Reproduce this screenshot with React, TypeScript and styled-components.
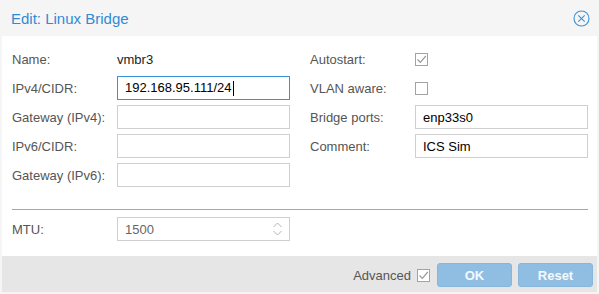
import React from 'react';
import styled, { createGlobalStyle } from 'styled-components';

const GlobalStyle = createGlobalStyle`
  body {
    margin: 0;
    font-family: "Liberation Sans", Arial, sans-serif;
    font-size: 13px;
  }
  * {
    box-sizing: border-box;
  }
`;

const Window = styled.div`
  width: 599px;
  height: 294px;
  background: #f5f5f5;
  padding: 0 2px 2px;
  display: flex;
  flex-direction: column;
`;

const Header = styled.div`
  height: 36px;
  display: flex;
  align-items: center;
  justify-content: space-between;
  padding: 0 7px 0 9px;
`;

const Title = styled.div`
  font-size: 15px;
  color: #2f8bd5;
`;

const CloseButton = styled.button`
  width: 17px;
  height: 17px;
  padding: 0;
  border: none;
  background: none;
  display: flex;
  align-items: center;
  justify-content: center;
`;

const Body = styled.div`
  flex: 1;
  background: #fff;
  padding: 11px 9px 0 10px;
`;

const Columns = styled.div`
  display: grid;
  grid-template-columns: 278px 278px;
  column-gap: 20px;
`;

const Column = styled.div`
  display: flex;
  flex-direction: column;
  gap: 5px;
`;

const Row = styled.div`
  display: flex;
  align-items: center;
  height: 24px;
`;

const Label = styled.div`
  width: 105px;
  color: #555;
`;

const Value = styled.div`
  color: #222;
`;

const Field = styled.div<{ $focused?: boolean; $muted?: boolean }>`
  width: 173px;
  height: 24px;
  border: 1px solid ${(p) => (p.$focused ? '#3892d4' : '#cfcfcf')};
  padding: 0 6px 0 7px;
  display: flex;
  align-items: center;
  justify-content: space-between;
  color: ${(p) => (p.$muted ? '#666' : '#000')};
  background: #fff;
`;

const Caret = styled.span`
  display: inline-block;
  width: 1px;
  height: 15px;
  background: #000;
  vertical-align: middle;
  margin-left: 1px;
`;

const Box = styled.span`
  width: 13px;
  height: 13px;
  border: 1px solid #a3a3a3;
  display: inline-flex;
  align-items: center;
  justify-content: center;
  background: #fff;
`;

const Separator = styled.div`
  height: 1px;
  background: #a8a8a8;
  margin: 22px 0 7px;
`;

const Footer = styled.div`
  height: 36px;
  background: #e6e6e6;
  display: flex;
  justify-content: flex-end;
  align-items: flex-start;
  gap: 6px;
  padding: 7px 4px 0 0;
`;

const Advanced = styled.div`
  height: 24px;
  display: flex;
  align-items: center;
  gap: 6px;
  margin-right: 1px;
  color: #555;
`;

const Button = styled.button`
  width: 75px;
  height: 24px;
  border: 1px solid #86b6dc;
  border-radius: 3px;
  background: #90bee3;
  color: #f4f9fd;
  font-family: inherit;
  font-size: 13px;
  font-weight: bold;
  padding: 0;
`;

const CheckBox: React.FC<{ checked?: boolean }> = ({ checked }) => (
  <Box>
    {checked && (
      <svg width="11" height="11" viewBox="0 0 11 11">
        <path d="M1.5 5.5 L4.3 8.3 L9.8 2" fill="none" stroke="#9a9a9a" strokeWidth="1.2" />
      </svg>
    )}
  </Box>
);

const Spinner = () => (
  <svg width="11" height="14" viewBox="0 0 11 14">
    <path d="M1.5 5 L5.5 1 L9.5 5" fill="none" stroke="#b5b5b5" strokeWidth="1" />
    <path d="M1.5 9 L5.5 13 L9.5 9" fill="none" stroke="#b5b5b5" strokeWidth="1" />
  </svg>
);

export default function App() {
  return (
    <>
      <GlobalStyle />
      <Window>
        <Header>
          <Title>Edit: Linux Bridge</Title>
          <CloseButton aria-label="Close">
            <svg width="17" height="17" viewBox="0 0 17 17">
              <circle cx="8.5" cy="8.5" r="7.5" fill="none" stroke="#3d92d6" strokeWidth="1.1" />
              <path d="M5.3 5.3 L11.7 11.7 M11.7 5.3 L5.3 11.7" stroke="#3d92d6" strokeWidth="1.1" />
            </svg>
          </CloseButton>
        </Header>
        <Body>
          <Columns>
            <Column>
              <Row>
                <Label>Name:</Label>
                <Value>vmbr3</Value>
              </Row>
              <Row>
                <Label>IPv4/CIDR:</Label>
                <Field $focused>
                  <span>
                    192.168.95.111/24
                    <Caret />
                  </span>
                </Field>
              </Row>
              <Row>
                <Label>Gateway (IPv4):</Label>
                <Field />
              </Row>
              <Row>
                <Label>IPv6/CIDR:</Label>
                <Field />
              </Row>
              <Row>
                <Label>Gateway (IPv6):</Label>
                <Field />
              </Row>
            </Column>
            <Column>
              <Row>
                <Label>Autostart:</Label>
                <CheckBox checked />
              </Row>
              <Row>
                <Label>VLAN aware:</Label>
                <CheckBox />
              </Row>
              <Row>
                <Label>Bridge ports:</Label>
                <Field>enp33s0</Field>
              </Row>
              <Row>
                <Label>Comment:</Label>
                <Field>ICS Sim</Field>
              </Row>
            </Column>
          </Columns>
          <Separator />
          <Row>
            <Label>MTU:</Label>
            <Field $muted>
              <span>1500</span>
              <Spinner />
            </Field>
          </Row>
        </Body>
        <Footer>
          <Advanced>
            Advanced
            <CheckBox checked />
          </Advanced>
          <Button>OK</Button>
          <Button>Reset</Button>
        </Footer>
      </Window>
    </>
  );
}
